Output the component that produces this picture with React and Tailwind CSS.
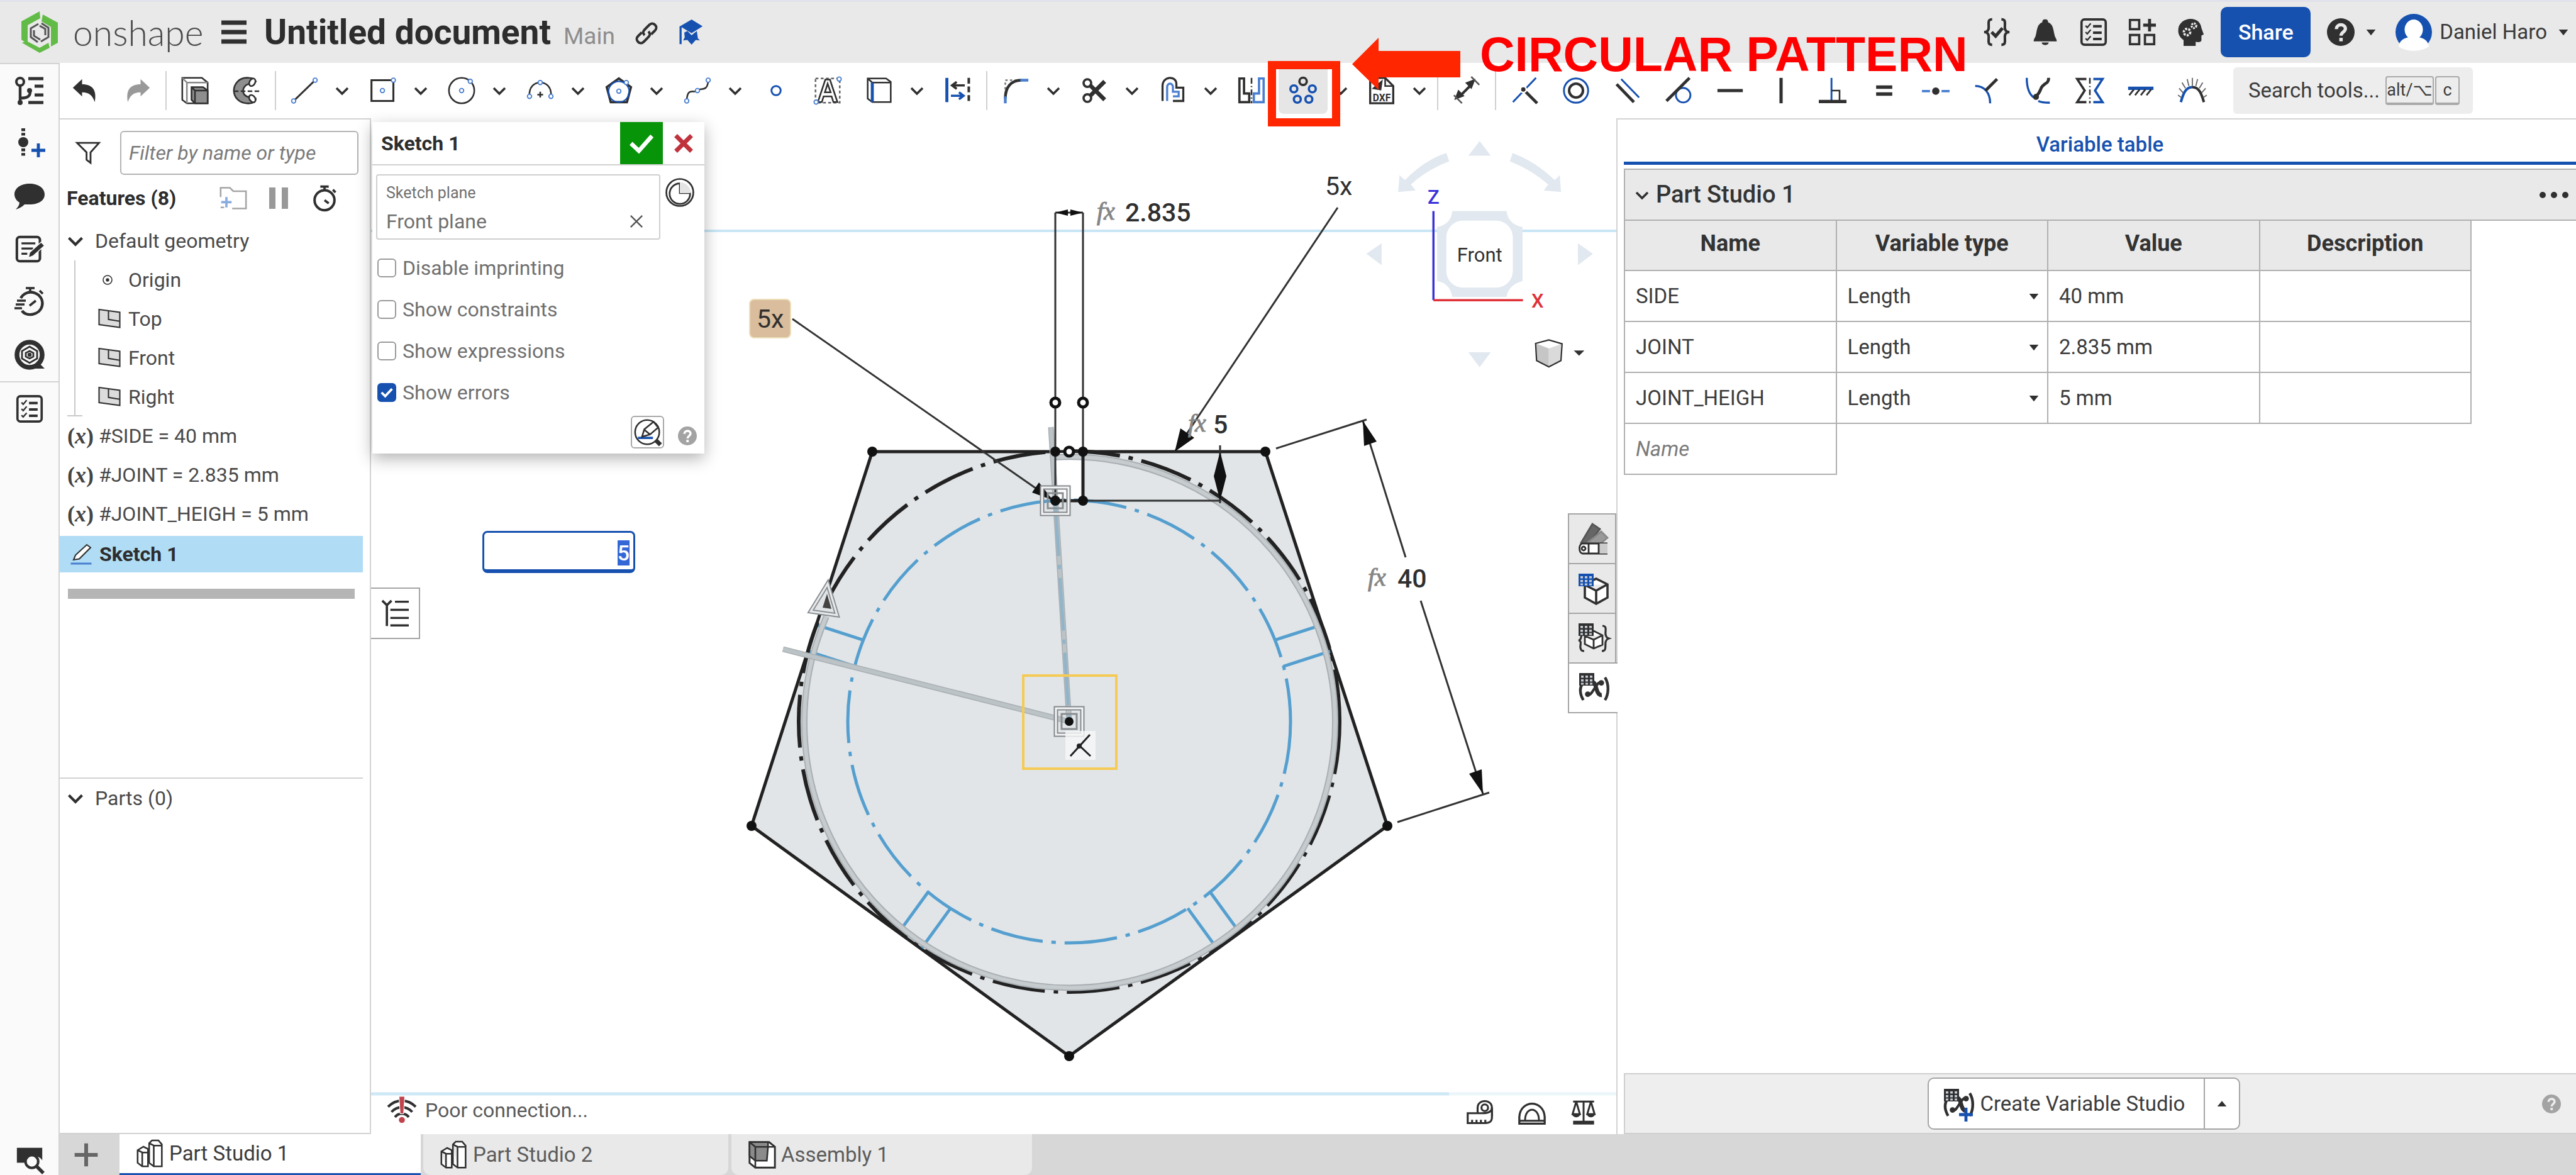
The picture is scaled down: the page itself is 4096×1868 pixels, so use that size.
import { useEffect, useRef } from 'react';

const INK = '#303030';
const BLUE = '#1651b0';

const variables = [
  { name: 'SIDE', type: 'Length', value: '40 mm' },
  { name: 'JOINT', type: 'Length', value: '2.835 mm' },
  { name: 'JOINT_HEIGH', type: 'Length', value: '5 mm' }
];

const planes = ['Top', 'Front', 'Right'];

const sketchOptions = [
  { id: 'imprinting', label: 'Disable imprinting', checked: false },
  { id: 'constraints', label: 'Show constraints', checked: false },
  { id: 'expressions', label: 'Show expressions', checked: false },
  { id: 'errors', label: 'Show errors', checked: true }
];

function Icon({ children, className = 'h-11 w-11', box = '0 0 24 24' }) {
  return (
    <svg
      className={`shrink-0 overflow-visible ${className}`}
      viewBox={box}
      fill="none"
      stroke={INK}
      strokeWidth="1.4"
      aria-hidden="true"
    >
      {children}
    </svg>
  );
}

function Knob({ x, y, r = 1.8 }) {
  return <circle cx={x} cy={y} r={r} fill="#fff" stroke="#4a7fd0" strokeWidth="1" />;
}

function Chevron({ className = 'h-6 w-6' }) {
  return (
    <Icon className={className}>
      <path d="M3 8 12 17 21 8" strokeWidth="3.6" />
    </Icon>
  );
}

function Caret({ className = 'h-4 w-4', up = false }) {
  return (
    <Icon className={className}>
      <path d={up ? 'M1 18 12 5 23 18Z' : 'M1 6h22L12 20Z'} fill={INK} stroke="none" />
    </Icon>
  );
}

function HelpIcon({ className = 'h-11 w-11', color = INK, mark = '#e9e9e9' }) {
  return (
    <Icon className={className}>
      <circle cx="12" cy="12" r="12" fill={color} stroke="none" />
      <path d="M8.2 9.4c0-5 7.8-4.8 7.8-.4 0 3-3.8 3-3.8 6.2" stroke={mark} strokeWidth="2.8" />
      <path d="M10.7 17h3v3h-3z" fill={mark} stroke="none" />
    </Icon>
  );
}

function ChecklistIcon() {
  return (
    <Icon>
      <rect x="1.5" y="1" width="21" height="22" rx="2.5" strokeWidth="2" />
      <path d="M5 6.5l1.5 1.5L9.5 4.5M5 12l1.5 1.5L9.5 10M5 17.5l1.5 1.5L9.5 15.5" strokeWidth="1.3" />
      <path d="M11.5 7H19M11.5 12.5H19M11.5 18H19" strokeWidth="2.2" />
    </Icon>
  );
}

function StopwatchIcon({ className = 'h-11 w-11' }) {
  return (
    <Icon className={className}>
      <circle cx="12" cy="14" r="9.5" strokeWidth="2.4" />
      <path d="M8 1h8M12 1v4M20 4l2.5 2.5M12 14l4 3" strokeWidth="2.2" />
    </Icon>
  );
}

function GridMark({ color = INK }) {
  return (
    <g>
      <rect x="1" y="0" width="12" height="10" fill={color} stroke="none" />
      <path
        d="M2.5 2h2v1.8h-2zM6 2h2v1.8H6zM9.5 2h2v1.8h-2zM2.5 5h2v1.8h-2zM6 5h2v1.8H6zM9.5 5h2v1.8h-2zM2.5 7.8h2v1.4h-2zM6 7.8h2v1.4H6zM9.5 7.8h2v1.4h-2z"
        fill="#c5cbd4"
        stroke="none"
      />
    </g>
  );
}

function VariableStudioIcon({ plus = false }) {
  return (
    <Icon className="h-12 w-12">
      <path d="M3.5 8.5c-2.5 4-1.5 9 .8 13M21.5 3.5c3.2 5 3.2 13 0 18" strokeWidth="2.2" />
      <path d="M12 7.5c3 0 2 10.5 7 10" strokeWidth="3.2" />
      <path d="M8 17.5c4 0 6-10 10.5-10.5" strokeWidth="2" />
      <circle cx="7.8" cy="16.8" r="2.2" fill={INK} stroke="none" />
      <circle cx="18.6" cy="7.8" r="2.2" fill={INK} stroke="none" />
      <GridMark />
      {plus && <path d="M18.5 15v11M13 20.5h11" stroke={BLUE} strokeWidth="2.4" />}
    </Icon>
  );
}

function PartStudioIcon() {
  return (
    <Icon>
      <path d="M1 9 6 6l4 2v15H5l-4-3ZM5 23V11L1 9M5 11h5" fill="#fff" />
      <path d="M11 3 13.5.5h5.5l3 3.5v19h-7l-4-3ZM15 23V5l-4-2M15 5h7" fill="#fff" />
    </Icon>
  );
}

function AssemblyIcon() {
  return (
    <Icon>
      <path d="M1 1h17l5 4v18H6l-5-4Z" fill="#fff" strokeWidth="1.6" />
      <path d="M1 1h16v4l-1 12H6L1 13Z" fill="#8b8b8b" />
      <path d="M1 1l5 4v18M6 5h17" />
    </Icon>
  );
}

const toolIcons = {
  undo: <path d="M1 9.5 9 2v4.5c9 0 13 5 11 15.5-2-6-5-8.5-11-8.5V17Z" fill={INK} stroke="none" />,
  redo: <path d="M23 9.5 15 2v4.5c-9 0-13 5-11 15.5 2-6 5-8.5 11-8.5V17Z" fill="#999" stroke="none" />,
  extrude: (
    <g>
      <path d="M1 1h17l5 4v18H5l-4-3Z" fill="#fff" />
      <path d="M1 1l4 4v18M5 5h18" stroke="#888" />
      <path d="M9 9h10l4 3v11H12l-3-3Z" fill="#8e8e8e" />
      <path d="M9 9l3 3h11M12 12v11" />
    </g>
  ),
  revolve: (
    <g>
      <path d="M14 1C5 0 1 7 1 12s4 12 14 11c3 0 5-2 5-4l-5-1c-5-1-6-4-6-6s2-6 7-6l4-2c-1-2-3-3-6-3Z" fill="#8e8e8e" />
      <ellipse cx="17" cy="4.8" rx="2.4" ry="3.5" fill="#fff" transform="rotate(30 17 4.8)" />
      <ellipse cx="17" cy="19" rx="2.4" ry="3.5" fill="#fff" transform="rotate(-35 17 19)" />
      <path d="M1 12.5h22" strokeDasharray="4 2" />
    </g>
  ),
  line: (
    <g>
      <path d="M2.7 21 21.3 3" strokeWidth="1.7" />
      <Knob x={2.7} y={21} />
      <Knob x={21.3} y={3} />
    </g>
  ),
  rect: (
    <g>
      <path d="M2 3h19v18H2z" strokeWidth="1.7" />
      <Knob x={11.5} y={12} />
      <Knob x={21} y={3} />
    </g>
  ),
  circle: (
    <g>
      <circle cx="12" cy="12" r="11" />
      <Knob x={12} y={12} />
      <Knob x={19.5} y={4} />
    </g>
  ),
  arc: (
    <g>
      <path d="M2.7 17C1 1 23 1 21.3 17" />
      <path d="M12 13v5M9.5 15.5h5" />
      <Knob x={2.7} y={17} />
      <Knob x={21.3} y={17} />
      <Knob x={12} y={5} />
    </g>
  ),
  polygon: (
    <g>
      <path d="M12 1.5 22.5 9 19 22H5L1.5 9Z" strokeWidth="2" />
      <circle cx="12" cy="13" r="9" stroke={BLUE} strokeWidth="1.2" />
      <Knob x={12} y={12.5} />
      <Knob x={18.5} y={5} />
    </g>
  ),
  spline: (
    <g>
      <path d="M2.7 21C3 8 10 15 12 12s9 2 9.3-9" />
      <Knob x={2.7} y={21} />
      <Knob x={12} y={12} />
      <Knob x={21.3} y={3} />
    </g>
  ),
  point: <circle cx="12" cy="12" r="4" stroke={BLUE} strokeWidth="1.6" />,
  text: (
    <g>
      <path d="M1.5 1.5h21v21h-21z" strokeDasharray="2.5 2" stroke="#666" />
      <path d="M3.5 22 10 2.5h4L20.5 22H17l-1.6-5H8.5L7 22ZM9.6 13.5h5L12 6Z" fill="#fff" />
      <Knob x={2} y={22} />
      <Knob x={22} y={2} />
    </g>
  ),
  use: (
    <g>
      <path d="M2 1.5h16l4 3V22H6L2 19Z" fill="#fff" />
      <path d="M2 1.5 6 5h16" />
      <path d="M6 5v17" stroke={BLUE} strokeWidth="2.6" />
    </g>
  ),
  convert: (
    <g>
      <path d="M2.5 1v21" stroke={BLUE} strokeWidth="2.6" />
      <path d="M21.5 1v21" strokeWidth="2.2" strokeDasharray="5 2.5" />
      <path d="M18 7.5H8M11 4.5l-4 3 4 3" strokeWidth="2" />
      <path d="M6 16.5h10M13 13.5l4 3-4 3" stroke={BLUE} strokeWidth="2" />
    </g>
  ),
  fillet: (
    <g>
      <path d="M3 15V3h11" strokeDasharray="2 2" stroke="#777" />
      <path d="M3 19C3 9 8 3 17 3" strokeWidth="2.4" />
      <path d="M3 17v6M16 3h7" stroke="#4a7fd0" strokeWidth="2.4" />
    </g>
  ),
  trim: (
    <g>
      <circle cx="6" cy="5.5" r="3.3" strokeWidth="2" />
      <circle cx="6" cy="18.5" r="3.3" strokeWidth="2" />
      <path d="M8.5 7.5 21 20M8.5 16.5 21 4" strokeWidth="3.6" />
    </g>
  ),
  offset: (
    <g>
      <path d="M3 21V8c0-9 12-9 12-2v3.5h6V21h-9" strokeWidth="1.8" />
      <path d="M7 21V9c0-4 5-4 5 0v4h5v4h-5" stroke="#4a7fd0" strokeWidth="1.8" />
    </g>
  ),
  mirror: (
    <g>
      <path d="M1.5 1.5h4v13H10V22H1.5z" strokeWidth="2" />
      <path d="M22.5 1.5h-4v13H14V22h8.5z" stroke="#4a7fd0" strokeWidth="2" />
      <path d="M12 1v22" strokeDasharray="5 2 1 2" />
    </g>
  ),
  circular: (
    <g strokeWidth="2">
      <circle cx="12" cy="4" r="3.2" />
      <circle cx="4" cy="10.5" r="3" stroke={BLUE} />
      <circle cx="20" cy="10.5" r="3" stroke={BLUE} />
      <circle cx="7" cy="19.5" r="3" stroke={BLUE} />
      <circle cx="17" cy="19.5" r="3" stroke={BLUE} />
    </g>
  ),
  dxf: (
    <g>
      <path d="M2 1h13l7 7v15H2z" fill="#fff" strokeWidth="1.8" />
      <path d="M15 1v7h7" />
      <path d="M5 10 12 4l-1 7Z" fill={INK} />
      <text x="12" y="21" fontSize="8.5" fontWeight="700" textAnchor="middle" fill={INK} stroke="none" fontFamily="Roboto">DXF</text>
    </g>
  ),
  dimension: (
    <g>
      <path d="M6 17 17 6" strokeWidth="2.2" />
      <path d="M2.5 19 9 16.5l-4-4ZM18.5 3l-6.5 2.5 4 4Z" fill={INK} />
      <path d="M1 16l7 7M16 0l7 7" stroke="#555" />
    </g>
  ),
  coincident: (
    <g>
      <path d="M2 22 22 1" stroke={BLUE} strokeWidth="1.6" />
      <path d="M12 12 23 23" strokeWidth="2.6" />
      <circle cx="11" cy="11" r="2.6" fill={INK} stroke="#fff" />
    </g>
  ),
  concentric: (
    <g>
      <circle cx="12" cy="12" r="10.5" stroke={BLUE} strokeWidth="1.6" />
      <circle cx="12" cy="12" r="6" strokeWidth="2.2" />
    </g>
  ),
  parallel: (
    <g>
      <path d="M3 6.5 18 22" strokeWidth="2.6" />
      <path d="M7 2 22.5 18" stroke={BLUE} strokeWidth="1.6" />
    </g>
  ),
  tangent: (
    <g>
      <circle cx="16" cy="16" r="6.3" stroke={BLUE} strokeWidth="1.6" />
      <path d="M1.5 21 21.5 1" strokeWidth="2.6" />
    </g>
  ),
  horizontal: <path d="M1 12h22" strokeWidth="2.8" />,
  vertical: <path d="M12 1v22" strokeWidth="2.8" />,
  perpendicular: (
    <g>
      <path d="M11 1v20" stroke={BLUE} strokeWidth="1.6" />
      <path d="M11 12h7v9" />
      <path d="M0 21.5h24" strokeWidth="2.8" />
    </g>
  ),
  equal: <path d="M5 9h14M5 15h14" strokeWidth="3" />,
  midpoint: (
    <g>
      <path d="M0 12.5h7M17 12.5h7" stroke="#4a7fd0" strokeWidth="2" />
      <circle cx="12" cy="12.5" r="3.2" fill={INK} stroke="none" />
    </g>
  ),
  normal: (
    <g>
      <path d="M2 8c8 0 13 6 13 15" stroke={BLUE} strokeWidth="1.8" />
      <path d="M11 12 21 2" strokeWidth="2.6" />
    </g>
  ),
  pierce: (
    <g>
      <path d="M2 1c0 8 2 14 6 17M12 21c3 1.5 6 1.5 10 1.5" stroke={BLUE} strokeWidth="1.8" />
      <path d="M21 1c0 6-5 4-7 10-1 3-2 4-4 6" strokeWidth="2.6" />
      <circle cx="10" cy="17.5" r="2.6" fill={INK} stroke="none" />
    </g>
  ),
  symmetric: (
    <g>
      <path d="M9 2H1l6.5 10L1 22h8" strokeWidth="2" />
      <path d="M15 2h8l-6.5 10L23 22h-8" stroke={BLUE} strokeWidth="2" />
      <path d="M12 1v22" strokeDasharray="5 2 1 2" />
    </g>
  ),
  fix: (
    <g>
      <path d="M1 10h22" stroke={BLUE} strokeWidth="2.8" />
      <path d="M6 11l-4 5M11 11l-4 5M16 11l-4 5M21 11l-4 5" strokeWidth="1.5" />
    </g>
  ),
  curvature: (
    <g>
      <path d="M2 22C4 15 6 9 12 9" stroke={BLUE} strokeWidth="2.2" />
      <path d="M12 9c6 0 8 6 10 13" strokeWidth="2.2" />
      <path d="M12 8V1M15 8l1.5-6M9 8 7.5 2M18 10l3-5M6 10 3 5M4 14 .5 10M20 14l3.5-4M2.5 18-.5 16M21.5 18l3-2" strokeWidth="1" stroke="#666" />
    </g>
  )
};

// entries are [icon, has drop-down]; null draws a divider
const sketchTools = [
  ['undo'], ['redo'], null,
  ['extrude'], ['revolve'], null,
  ['line', true], ['rect', true], ['circle', true], ['arc', true], ['polygon', true], ['spline', true],
  ['point'], ['text'], ['use', true], ['convert'], null,
  ['fillet', true], ['trim', true], ['offset', true], ['mirror'], ['circular', true], ['dxf', true], null,
  ['dimension'], null
];

const constraintTools = [
  'coincident', 'concentric', 'parallel', 'tangent', 'horizontal', 'vertical', 'perpendicular',
  'equal', 'midpoint', 'normal', 'pierce', 'symmetric', 'fix', 'curvature'
];

function Header() {
  return (
    <header className="flex h-[100px] shrink-0 items-center border-t-[3px] border-[#e0e1ea] bg-[#e9e9e9] pb-[1px] pl-[32px] pr-[12px]">
      <Icon className="h-[66px] w-[62px]" box="0 0 62 66">
        <path d="M31 0 2 16v29l10 7V22l20-11Z" fill="#62bb46" stroke="none" />
        <path d="M36 5l24 13v32l-11 6V25L34 16Z" fill="#62bb46" stroke="none" />
        <path d="M3 50l7-3 21 11 14-8 2 8-16 8Z" fill="#62bb46" stroke="none" />
        <path d="M29 20 17 27v14l11 8M34 19l11 7v15l-12 7M22 30v9l10 6M31 23l9 5v10" stroke="#555" strokeWidth="3" />
      </Icon>
      <span className="ml-[22px] w-[212px] font-[Lato] text-[57px] leading-[60px] font-light text-[#4a4a4a]">onshape</span>
      <button type="button" aria-label="Document menu" className="ml-[24px]">
        <Icon className="h-10 w-10" box="0 0 40 40">
          <path d="M0 5h40M0 20h40M0 35h40" strokeWidth="7" />
        </Icon>
      </button>
      <h1 className="ml-[28px] text-[55px] leading-[60px] font-bold text-[#2d2d2d]">Untitled document</h1>
      <span className="ml-[20px] pt-[14px] text-[37px] leading-[40px] text-[#8d8d8d]">Main</span>
      <button type="button" aria-label="Copy link" className="ml-[32px] pt-[4px]">
        <Icon className="h-9 w-9">
          <path d="M10 14c-3-3-1-5 1-7l4-4c4-4 10 2 6 6l-4 4M14 10c3 3 1 5-1 7l-4 4c-4 4-10-2-6-6l4-4" strokeWidth="2.6" />
        </Icon>
      </button>
      <button type="button" aria-label="Learning centre" className="ml-[32px]">
        <Icon className="h-10 w-10">
          <path d="M13 0 23.5 6.5 13 13 2 6.5Z" fill={BLUE} stroke="none" />
          <path d="M2.5 6.5v17" stroke={BLUE} strokeWidth="2" />
          <path d="M6 12.5 9 11l4 4 5-4 1 7 2 2-4-.5L13 24l-4-4.5-4 .5 1.5-3Z" fill={BLUE} stroke="none" />
        </Icon>
      </button>

      <div className="ml-auto flex items-center">
        <div className="flex gap-[33px]">
          <button type="button" aria-label="Checks">
            <Icon>
              <path d="M8 1C4 1 5 4 5 8c0 3-2 4-4 4 2 0 4 1 4 4 0 4-1 7 3 7M16 1c4 0 3 3 3 7 0 3 2 4 4 4-2 0-4 1-4 4 0 4 1 7-3 7" strokeWidth="2.2" />
              <path d="M7.5 12l3.5 3.5 6-7" strokeWidth="2.8" />
            </Icon>
          </button>
          <button type="button" aria-label="Notifications">
            <Icon>
              <path d="M12 1c2 0 2.5 1 2.5 2.5C19 5 19 10 20 14c.5 3 2 3.5 2 6H2c0-2.5 1.5-3 2-6 1-4 1-9 5.5-10.5C9.5 2 10 1 12 1ZM9 21h6c0 3-6 3-6 0Z" fill={INK} stroke="none" />
            </Icon>
          </button>
          <button type="button" aria-label="Tasks"><ChecklistIcon /></button>
          <button type="button" aria-label="Apps">
            <Icon>
              <path d="M1.5 1.5h8v8h-8zM1.5 14.5h8v8h-8zM14.5 14.5h8v8h-8z" strokeWidth="2" />
              <path d="M18.5.5v11M13 6h11" strokeWidth="2.6" />
            </Icon>
          </button>
          <button type="button" aria-label="AI advisor">
            <Icon>
              <path d="M6 24v-5C2 16 1 13 1.5 9 2 4 7 .5 12 .5c6 0 9 3.5 9.5 8l2 5.5-2 1v4c0 2-3 2-5 1.5V24Z" fill={INK} stroke="none" />
              <circle cx="9" cy="12" r="2.8" stroke="#e9e9e9" strokeWidth="2" strokeDasharray="1.8 1" />
              <circle cx="15" cy="6.5" r="2" stroke="#e9e9e9" strokeWidth="1.8" strokeDasharray="1.5 .8" />
            </Icon>
          </button>
        </div>
        <button type="button" className="ml-[26px] h-[80px] w-[143px] rounded-[10px] bg-[#1651b0] text-[34px] font-medium text-white">Share</button>
        <button type="button" aria-label="Help" className="ml-[26px] flex items-center gap-[18px]">
          <HelpIcon />
          <Caret />
        </button>
        <button type="button" className="ml-[31px] flex items-center text-[33px] text-[#3a3a3a]">
          <Icon className="h-[58px] w-[58px]" box="0 0 58 58">
            <circle cx="29" cy="29" r="29" fill={BLUE} stroke="none" />
            <ellipse cx="29" cy="25" rx="14.5" ry="16" fill="#fff" stroke="none" />
            <path d="M5 52c1-9 8-14 18-15h12c10 1 17 6 18 15-12 9-36 9-48 0Z" fill="#fff" stroke="none" />
          </Icon>
          <span className="ml-[12px] mr-[18px]">Daniel Haro</span>
          <Caret />
        </button>
      </div>
    </header>
  );
}

function Toolbar() {
  return (
    <div className="flex h-[88px] shrink-0 items-center bg-white">
      {sketchTools.map((tool, i) =>
        tool === null ? (
          <span key={i} className="mx-1 h-[62px] w-[2px] shrink-0 bg-[#d0d0d0]" />
        ) : (
          <div key={i} className="flex shrink-0 items-center">
            <button
              type="button"
              aria-label={tool[0]}
              className={`mx-[2px] flex h-[74px] w-[78px] items-center justify-center ${tool[0] === 'circular' ? 'rounded-b-lg bg-[#e6e6e6]' : ''}`}
            >
              <Icon>{toolIcons[tool[0]]}</Icon>
            </button>
            {tool[1] && (
              <button type="button" aria-label={`${tool[0]} options`} className="flex h-[74px] w-[43px] items-center pl-[7px]">
                <Chevron />
              </button>
            )}
          </div>
        )
      )}
      <div className="grid w-[1144px] shrink-0 grid-cols-14">
        {constraintTools.map((name) => (
          <button key={name} type="button" aria-label={name} className="flex h-[74px] items-center justify-center">
            <Icon>{toolIcons[name]}</Icon>
          </button>
        ))}
      </div>
      <button type="button" className="ml-[24px] flex h-[74px] w-[381px] shrink-0 items-center rounded-md bg-[#ededed] pl-[24px] text-[33px] text-[#3c3c3c]">
        <span className="w-[218px] text-left">Search tools...</span>
        <kbd className="mr-[2px] flex h-[46px] w-[77px] items-center justify-center rounded border-2 border-b-4 border-[#a9a9a9] font-[Roboto,'DejaVu_Sans',sans-serif] text-[27px]">alt/⌥</kbd>
        <kbd className="flex h-[46px] w-[39px] items-center justify-center rounded border-2 border-b-4 border-[#a9a9a9] font-[Roboto] text-[27px]">c</kbd>
      </button>
    </div>
  );
}

function SideRail() {
  const cell = 'flex h-[84px] w-full items-center justify-center';
  return (
    <nav className="flex w-[95px] shrink-0 flex-col border-t-2 border-r-2 border-[#d3d3d3] bg-[#fafafa]">
      <button type="button" aria-label="Versions" className={cell}>
        <Icon className="h-12 w-12">
          <circle cx="4.5" cy="5" r="3" strokeWidth="2" />
          <path d="M4.5 8v13M4.5 18c5 0 8-1 8-5" strokeWidth="2.2" />
          <circle cx="4.5" cy="21.5" r="2" fill={INK} stroke="none" />
          <circle cx="12" cy="12" r="2" fill={INK} stroke="none" />
          <path d="M11 2.5h12M16 8.5h7M16 15.5h7M11 21.5h12" strokeWidth="2.4" />
        </Icon>
      </button>
      <button type="button" aria-label="Insert version" className={cell}>
        <Icon className="h-12 w-12">
          <circle cx="7" cy="11" r="4" fill={INK} stroke="none" />
          <path d="M7 0v6M7 16v7" strokeWidth="3" strokeDasharray="2.2 1.4" />
          <path d="M19 12v11M13.5 17.5h11" stroke={BLUE} strokeWidth="2.4" />
        </Icon>
      </button>
      <button type="button" aria-label="Comments" className={cell}>
        <Icon className="h-12 w-12">
          <path d="M12 2c7 0 12 3.5 12 8.5S19 18.5 12 18.5c-2 0-3 0-4 0-2 2-4 3-7 4 2-2 3-4 3-5.5C1.5 15.5 0 13 0 10.5 0 5.5 5 2 12 2Z" fill={INK} stroke="none" />
        </Icon>
      </button>
      <button type="button" aria-label="Notes" className={cell}>
        <Icon>
          <rect x="1" y="1.5" width="20" height="21" rx="2.5" strokeWidth="2.2" />
          <path d="M5 7h12M5 11.5h10M5 16h5" strokeWidth="1.8" />
          <path d="M12 15 22 6l3 3-10 9-4 1.5Z" fill={INK} stroke="#fafafa" strokeWidth=".8" />
        </Icon>
      </button>
      <button type="button" aria-label="Performance" className={cell}>
        <Icon className="h-12 w-12">
          <path d="M5 9c5-9 19-4 17 6-2 8-13 9-16 4" strokeWidth="2.2" />
          <path d="M9 1h7M12.5 1v4M20 3l2.5 2.5M12 15l5-4M2 11h7M1 14h7M0 17h6" strokeWidth="1.8" />
        </Icon>
      </button>
      <button type="button" aria-label="Search models" className={cell}>
        <Icon className="h-12 w-12">
          <circle cx="12" cy="12" r="10" strokeWidth="3.8" />
          <path d="M18 17l6 6h-8Z" fill={INK} stroke="none" />
          <path d="M12 5.5 18 9v6l-6 3.5L6 15V9ZM12 9l3 1.5v3L12 15l-3-1.5v-3Z" strokeWidth="1.4" />
          <circle cx="12" cy="12" r="1.6" fill={INK} stroke="none" />
        </Icon>
      </button>
      <div className="border-t-2 border-[#d3d3d3]">
        <button type="button" aria-label="Task list" className={cell}><ChecklistIcon /></button>
      </div>
      <button type="button" aria-label="Find" className="mt-auto flex h-[50px] items-center justify-center">
        <Icon>
          <path d="M1 2h22v11a7 7 0 0 0-13 2H1Z" fill={INK} stroke="none" />
          <circle cx="14" cy="14" r="5.5" fill="#fafafa" strokeWidth="2.2" />
          <path d="M18 18l6 6" strokeWidth="3" />
        </Icon>
      </button>
    </nav>
  );
}

function VariableMark() {
  return (
    <span className="w-[50px] font-[Liberation_Serif] text-[36px] font-bold leading-[40px] text-[#444]" aria-hidden="true">
      (<i>x</i>)
    </span>
  );
}

function FeaturePanel() {
  return (
    <aside className="flex w-[495px] shrink-0 flex-col border-t-2 border-r-2 border-b-2 border-[#d3d3d3] bg-white text-[32px] text-[#4a4a4a]">
      <div className="flex items-center pt-[18px] pl-[26px]">
        <Icon className="h-[38px] w-[38px]">
          <path d="M1 2h22l-8.5 9.5V22l-4-3v-7.5Z" strokeWidth="1.8" />
        </Icon>
        <input
          type="text"
          aria-label="Filter features"
          placeholder="Filter by name or type"
          className="ml-[32px] h-[70px] w-[379px] rounded-[6px] border-2 border-[#b4b4b4] px-[12px] italic placeholder:text-[#7b7b7b]"
        />
      </div>
      <div className="flex h-[74px] items-center pl-[11px]">
        <h2 className="w-[243px] font-bold text-[#2d2d2d]">Features (8)</h2>
        <button type="button" aria-label="Add folder">
          <Icon>
            <path d="M1 11V3h8l3 3h11v15H11M1 20h3" stroke="#a5a5a5" />
            <path d="M6 11v9M1.5 15.5h9" stroke="#8aabdf" strokeWidth="2" />
          </Icon>
        </button>
        <button type="button" aria-label="Pause" className="ml-[35px]">
          <Icon className="h-[34px] w-[30px]" box="0 0 30 34">
            <path d="M0 0h10v34H0zM20 0h10v34H20z" fill="#999" stroke="none" />
          </Icon>
        </button>
        <button type="button" aria-label="Regeneration times" className="ml-[38px]">
          <StopwatchIcon className="h-10 w-10" />
        </button>
      </div>

      <ul>
        <li className="flex h-[62px] items-center pl-[11px]">
          <Chevron className="mr-[17px] h-7 w-7" />
          Default geometry
        </li>
        <li className="flex">
          <div className="ml-[12px] w-[24px] border-b-2 border-[#c8c8c8]">
            <div className="ml-[11px] h-full w-[2px] bg-[#c8c8c8]" />
          </div>
          <ul>
            <li className="flex h-[62px] items-center">
              <Icon className="ml-[32px] mr-[25px] h-4 w-4">
                <circle cx="12" cy="12" r="10.5" strokeWidth="2.4" />
                <circle cx="12" cy="12" r="4" fill={INK} stroke="none" />
              </Icon>
              Origin
            </li>
            {planes.map((plane) => (
              <li key={plane} className="flex h-[62px] items-center">
                <Icon className="ml-[25px] mr-[12px] h-9 w-9">
                  <path d="M1 2 23 5v16L1 18Z" fill="#dcdcdc" />
                  <path d="M11 3.5v9L23 14.5" />
                </Icon>
                {plane}
              </li>
            ))}
          </ul>
        </li>
        {variables.map((v) => (
          <li key={v.name} className="flex h-[62px] items-center pl-[12px]">
            <VariableMark />#{v.name} = {v.value}
          </li>
        ))}
        <li className="mt-1 mr-[11px] flex h-[58px] items-center bg-[#b0ddf5] pl-[16px] font-bold text-[#2d2d2d]">
          <Icon className="mr-[11px] h-9 w-9">
            <path d="M4 18 6 13 18 2l4 3L10 17Z" fill="#fff" />
            <path d="M1 22h22" stroke="#4a7fd0" strokeWidth="2" />
          </Icon>
          Sketch 1
        </li>
      </ul>
      <div className="mt-[26px] mr-[24px] ml-[13px] h-[16px] bg-[#b5b5b5]" />
      <div className="mt-[284px] mr-[11px] flex h-[64px] items-center border-t-2 border-[#d3d3d3] pl-[11px]">
        <Chevron className="mr-[17px] h-7 w-7" />
        Parts (0)
      </div>
    </aside>
  );
}

function SketchDialog() {
  return (
    <section className="absolute top-[6px] left-[2px] w-[528px] bg-white text-[32px] text-[#707070] shadow-[0_8px_24px_rgba(0,0,0,0.3)]">
      <div className="flex h-[69px] items-center border-b-2 border-[#d0d0d0]">
        <h2 className="flex-1 pl-[14px] font-bold text-[#2d2d2d]">Sketch 1</h2>
        <button type="button" aria-label="Accept" className="flex h-full w-[68px] items-center justify-center bg-[#089408]">
          <Icon className="h-10 w-10">
            <path d="M2 12l7.5 7L22 5" stroke="#fff" strokeWidth="4" />
          </Icon>
        </button>
        <button type="button" aria-label="Cancel" className="flex h-full w-[66px] items-center justify-center">
          <Icon className="h-[30px] w-[30px]">
            <path d="M2 2l20 20M22 2 2 22" stroke="#c0333c" strokeWidth="5.5" />
          </Icon>
        </button>
      </div>
      <div className="flex items-start pt-[14px] pl-[6px]">
        <div className="h-[104px] w-[452px] rounded border-2 border-[#cfcfcf] px-[14px] pt-[10px]">
          <div className="text-[25px] leading-[36px]">Sketch plane</div>
          <div className="flex items-center justify-between pt-[3px] pr-[12px] leading-[48px]">
            Front plane
            <button type="button" aria-label="Clear sketch plane">
              <Icon className="h-5 w-5">
                <path d="M1 1l22 22M23 1 1 23" strokeWidth="2.8" stroke="#555" />
              </Icon>
            </button>
          </div>
        </div>
        <button type="button" aria-label="Final" className="ml-[8px] pt-[6px]">
          <Icon className="h-[46px] w-[46px]">
            <circle cx="12" cy="12" r="11.2" />
            <path d="M12 4.5v8h8.5A8.5 8.5 0 1 1 12 4.5Z" />
            <path d="M12 3.5a9 9 0 0 1 9 9h-9Z" fill="#e4e4e4" stroke="none" />
          </Icon>
        </button>
      </div>
      <div className="pt-[12px] pb-[2px] pl-[8px]">
        {sketchOptions.map((option) => (
          <label key={option.id} className="flex h-[66px] items-center gap-[10px]">
            <span className="grid h-[30px] w-[30px] place-items-center">
              <input
                type="checkbox"
                defaultChecked={option.checked}
                className="h-[30px] w-[30px] appearance-none rounded-[6px] border-2 border-[#9a9a9a] bg-white [grid-area:1/1] checked:border-[#1651b0] checked:bg-[#1651b0]"
              />
              <Icon className="pointer-events-none h-5 w-5 [grid-area:1/1]">
                <path d="M2 12l7 7L22 5" stroke="#fff" strokeWidth="4.5" />
              </Icon>
            </span>
            {option.label}
          </label>
        ))}
      </div>
      <div className="flex items-center justify-end pt-[2px] pr-[12px] pb-[8px]">
        <button type="button" aria-label="Sketch view" className="flex h-[52px] w-[53px] items-center justify-center rounded-[6px] border-2 border-[#a8a8a8]">
          <Icon>
            <circle cx="11.5" cy="12" r="10.5" />
            <path d="M3.5 17h13" stroke={BLUE} strokeWidth="2" />
            <path d="M7 16 9 9.5 17 3l4 5-7 6Z" />
            <path d="M9 10l5 4" />
            <path d="M19 19l4 4" strokeWidth="3.6" />
          </Icon>
        </button>
        <button type="button" aria-label="Help" className="ml-[22px] pt-[12px]">
          <HelpIcon className="h-[30px] w-[30px]" color="#a3a3a3" mark="#fff" />
        </button>
      </div>
    </section>
  );
}

function ViewCube() {
  return (
    <g transform="translate(2141 205) scale(0.31)">
      <g fill="#e1e8ef">
        <path d="M683 62 740 137H625ZM683 1222 740 1145H625ZM102 640 180 586V698ZM1264 640 1187 586V698Z" />
        <path d="M512 123 527 166Q410 210 330 285L355 315 265 323 272 237 300 262Q400 160 512 123ZM852 123 838 166Q950 210 1035 285L1012 315 1100 323 1094 237 1068 262Q965 165 852 123Z" />
        <path d="M543 421H821Q830 490 903 503V780Q830 800 821 861H543Q530 790 465 780V503Q535 490 543 421Z" />
      </g>
      <rect x="512" y="470" width="341" height="344" rx="85" fill="#fff" />
      <path d="M446 421V878" stroke="#3a32d8" strokeWidth="11" />
      <path d="M446 878H905" stroke="#e03038" strokeWidth="11" />
      <g fontSize="100" fontWeight="500" textAnchor="middle">
        <text x="683" y="680" fill="#303030" fontWeight="400">Front</text>
        <text x="446" y="385" fill="#3a32d8">Z</text>
        <text x="980" y="917" fill="#e03038">X</text>
      </g>
      <path d="M970 1100 1038 1082 1106 1102 1100 1188 1038 1220 975 1188Z" fill="#fff" />
      <path d="M970 1100 1038 1126V1220L975 1188Z" fill="#c6c6c6" />
      <path d="M1106 1102 1038 1126V1220L1100 1188Z" fill="#dadada" />
      <path d="M970 1100 1038 1082 1106 1102 1100 1188 1038 1220 975 1188Z" fill="none" stroke="#303030" strokeWidth="7" />
      <path d="M1166 1136H1220L1193 1163Z" fill="#303030" />
    </g>
  );
}

function SketchDrawing() {
  return (
    <svg
      className="absolute inset-0 h-full w-full"
      viewBox="590 188 1980 1615"
      preserveAspectRatio="xMinYMin meet"
      fill="none"
      role="img"
      aria-label="Sketch 1 drawing"
    >
      <path d="M590 367H2570" stroke="#c8e6f6" strokeWidth="4" />
      <path d="M590 1739H2304" stroke="#cfe8f6" strokeWidth="5" />
      <path d="M2304 1739H2570" stroke="#ebf6fa" strokeWidth="5" />

      <path d="M1387 718H2012L2206 1313 1700 1679 1195 1313Z" fill="#e1e5e8" stroke="#222" strokeWidth="5" />
      <path d="M1679 720H1721V795H1679Z" fill="#fff" />

      {/* joint slots repeated round the centre */}
      <g stroke="#559fcf" strokeWidth="5">
        <circle cx="1700" cy="1147" r="352" strokeDasharray="84 14 7 14" />
        {[72, 144, 216, 288].map((angle) => (
          <path key={angle} d="M1678 718V796M1722 718V796" transform={`rotate(${angle} 1700 1147)`} />
        ))}
      </g>

      <circle cx="1700" cy="1147" r="430" stroke="#222" strokeWidth="6" strokeDasharray="84 14 7 14" />

      {/* preview of the rotation */}
      <path d="M1677 727A422 422 0 1 1 1314 980" stroke="#a9afb3" strokeWidth="10" />
      <path d="M1677 727A422 422 0 1 1 1314 980" stroke="#c6cbce" strokeWidth="6" />
      <path d="M1671 679 1700 1147 1245 1032" stroke="#a9afb3" strokeWidth="9" />
      <path d="M1671 679 1700 1147 1245 1032" stroke="#bcc3c7" strokeWidth="6" />
      <path d="M1678 800 1700 1147" stroke="#91b4c9" strokeWidth="5" strokeDasharray="84 14 7 14" />
      <path d="M1316 928 1289 972 1331 978Z" fill="#e1e5e8" stroke="#8b8f92" strokeWidth="7" />
      <path d="M1316 928 1289 972 1331 978Z" stroke="#e8eaec" strokeWidth="3" />
      <path d="M1315 944 1322 968 1308 966Z" fill="#444" />

      <g stroke="#333" strokeWidth="3">
        <path d="M1678 338V796M1722 338V718M1678 338H1722" />
        <path d="M1722 796H1940M1940 708V800" />
        <path d="M1260 507 1674 795M2127 330 1868 718" />
        <path d="M2029 713 2173 667M2222 1307 2368 1260M2167 669 2235 886M2259 955 2358 1262" />
      </g>
      <path d="M1722 718V796M1684 796H1722" stroke="#222" strokeWidth="5" />

      <g fill="#111">
        <path d="M1678 338 1698 333V343ZM1722 338 1702 333V343Z" />
        <path d="M1940 718 1950 757H1930ZM1940 796 1950 757H1930Z" />
        <path d="M1868 718 1877 681 1899 696ZM1674 795 1641 783 1652 767Z" />
        <path d="M2167 669 2189 702 2169 709ZM2358 1262 2336 1230 2356 1223Z" />
        <circle cx="1387" cy="718" r="8" />
        <circle cx="2012" cy="718" r="8" />
        <circle cx="2206" cy="1313" r="8" />
        <circle cx="1700" cy="1679" r="8" />
        <circle cx="1195" cy="1313" r="8" />
        <circle cx="1678" cy="718" r="8" />
        <circle cx="1722" cy="718" r="8" />
        <circle cx="1678" cy="796" r="8" />
        <circle cx="1722" cy="796" r="8" />
        <circle cx="1700" cy="1147" r="7" />
      </g>
      <g fill="#fff" stroke="#111" strokeWidth="5">
        <circle cx="1678" cy="640" r="7" />
        <circle cx="1722" cy="640" r="7" />
        <circle cx="1700" cy="718" r="7" />
      </g>

      <rect x="1627" y="1074" width="148" height="148" stroke="#f5cb55" strokeWidth="4" />
      {[[1678, 796], [1700, 1147]].map(([x, y]) => (
        <g key={y} fill="none">
          <rect x={x - 21} y={y - 21} width="42" height="42" stroke="#85898c" strokeWidth="7" />
          <rect x={x - 21} y={y - 21} width="42" height="42" stroke="#f4f5f6" strokeWidth="3" />
          <rect x={x - 12} y={y - 12} width="24" height="24" stroke="#8a8e91" strokeWidth="3" />
        </g>
      ))}
      <rect x="1694" y="1162" width="48" height="46" fill="#f6f7f8" fillOpacity="0.8" />
      <path d="M1702 1202 1733 1168M1717 1186 1734 1202" stroke="#222" strokeWidth="3" />
      <circle cx="1716" cy="1186" r="4" fill="#222" />

      <rect x="1192" y="476" width="65" height="61" rx="7" fill="#d9bd9c" stroke="#ecdfba" strokeWidth="2" />
      <g fill="#303030" fontSize="41">
        <text x="1203" y="521">5x</text>
        <text x="2107" y="310">5x</text>
        <g fontWeight="500">
          <text x="1789" y="352">2.835</text>
          <text x="1929" y="689">5</text>
          <text x="2222" y="934">40</text>
        </g>
      </g>
      <g fill="#858585" stroke="#858585" strokeWidth="1" fontSize="40" fontStyle="italic" fontFamily="Liberation Serif">
        <text x="1744" y="349">fx</text>
        <text x="1889" y="686">fx</text>
        <text x="2175" y="931">fx</text>
      </g>

      <ViewCube />
    </svg>
  );
}

function InstanceCountInput() {
  const ref = useRef(null);

  useEffect(() => {
    ref.current.focus();
    ref.current.select();
  }, []);

  return (
    <input
      ref={ref}
      type="text"
      aria-label="Number of instances"
      defaultValue="5"
      className="absolute top-[656px] left-[177px] h-[67px] w-[243px] rounded-[8px] border-[3px] border-b-[6px] border-[#1651b0] bg-white pt-[6px] pr-[6px] text-right text-[34px] font-medium text-[#303030] outline-none selection:bg-[#3367d6] selection:text-white"
    />
  );
}

function PanelTabs() {
  const tab = 'flex h-[79px] w-[77px] items-center justify-center border-2 border-b-0 border-[#a5a5a5]';
  return (
    <div className="absolute top-[628px] right-0 flex flex-col">
      <button type="button" aria-label="Appearances" className={`${tab} bg-[#e9e9e9]`}>
        <Icon className="h-12 w-12">
          <path d="M3 15 12 0l6 4L8 17Z" fill="#666" stroke="#555" />
          <path d="M8 15 19 6l5 5-6 5Z" fill="#999" stroke="#888" />
          <path d="M24 15.5H4c-3 1-3 7 0 8h20" fill="#fff" />
          <path d="M17 15.5h7v8h-7z" fill="#ccc" stroke="none" />
          <path d="M9 15.5v8M17 15.5v8" />
          <circle cx="5" cy="19.5" r="1.5" />
        </Icon>
      </button>
      <button type="button" aria-label="Configurations" className={`${tab} bg-[#e9e9e9]`}>
        <Icon className="h-12 w-12">
          <path d="M6 8 15 4l9 4.5V19l-9 5-9-5ZM6 9l9 4.5L24 8.5M15 13.5V24" fill="#fff" strokeWidth="1.8" />
          <GridMark color={BLUE} />
        </Icon>
      </button>
      <button type="button" aria-label="Configured properties" className={`${tab} bg-[#e9e9e9]`}>
        <Icon className="h-12 w-12">
          <path d="M6 9 13 6l7 3.5V17l-7 3-7-3.5ZM6 10l7 3 7-3.5M13 13v7" fill="#fff" />
          <path d="M4 10c-2 0 0 3-3 3.5 3 .5 1 4 1.5 6 .5 2 1 2.5 3 2.5M20 2c4 0 2 4 2.5 7 .5 2 1 2.5 2.5 3-1.5.5-2 1-2.5 3-.5 3 1 7-3 7" strokeWidth="1.6" />
          <GridMark />
        </Icon>
      </button>
      <button type="button" aria-label="Variable table" className="-mr-[2px] flex h-[81px] w-[79px] items-center justify-center border-2 border-r-0 border-[#a5a5a5] bg-white pr-[2px]">
        <VariableStudioIcon />
      </button>
    </div>
  );
}

function Canvas() {
  return (
    <main className="relative min-w-0 flex-[1980] bg-white">
      <SketchDrawing />
      <SketchDialog />
      <InstanceCountInput />
      <button type="button" aria-label="Feature list" className="absolute top-[746px] left-0 flex h-[82px] w-[78px] items-center justify-center border-2 border-l-0 border-[#a5a5a5] bg-white">
        <Icon>
          <path d="M1 1l4 4 4-4M5 5v18" strokeWidth="2" />
          <path d="M12 2h12M8 9h16M8 16h16M8 22.5h16" strokeWidth="1.8" />
        </Icon>
      </button>
      <PanelTabs />

      <div className="absolute right-0 bottom-0 left-0 flex h-[76px] items-center pr-[32px] pl-[27px] text-[32px] text-[#5a5a5a]">
        <Icon>
          <path d="M0 9C7 2 17 2 24 9M3 13.5c5-5.5 13-5.5 18 0M6 18c3-4 9-4 12 0" strokeWidth="2.2" />
          <path d="M9.5 0h5l-1 15h-3Z" fill="#c0434c" stroke="#fff" strokeWidth=".6" />
          <circle cx="12" cy="20.5" r="2.6" fill="#c0434c" stroke="none" />
        </Icon>
        <span className="ml-[15px]">Poor connection...</span>
        <div className="ml-auto flex items-center gap-[40px] pt-[6px]">
          <button type="button" aria-label="Measure">
            <Icon className="h-[42px] w-[42px]">
              <path d="M10 14V8c0-8 13-8 13 0v8" fill="#fff" strokeWidth="1.8" />
              <path d="M1 13h13c5 0 9-1 9-5v9c0 3-2 5-6 5H1Z" fill="#fff" strokeWidth="1.8" />
              <path d="M5 22v-3M9 22v-3M13 22v-3M17 22v-3" strokeWidth="1.8" />
              <circle cx="16.5" cy="8" r="3" fill="#fff" strokeWidth="1.8" />
            </Icon>
          </button>
          <button type="button" aria-label="Angle">
            <Icon>
              <path d="M1 22V16C2 1 22 1 23 16v6Z" fill="#fff" strokeWidth="1.8" />
              <path d="M1 19.5h22M6 19c0-12 12-12 12 0" strokeWidth="1.6" />
            </Icon>
          </button>
          <button type="button" aria-label="Mass properties">
            <Icon className="h-[40px] w-[40px]">
              <path d="M12 1v20M2 2h20M5 2 1.5 14h7L5 2M19 2l-3.5 12h7L19 2" strokeWidth="1.8" />
              <path d="M1 14h8c-1 4-7 4-8 0ZM15 14h8c-1 4-7 4-8 0Z" fill={INK} stroke="none" />
              <path d="M2 22h20" strokeWidth="3.6" />
            </Icon>
          </button>
        </div>
      </div>
    </main>
  );
}

function VariablePanel() {
  const cell = 'h-[81px] border-2 border-[#b0b0b0] px-[17px]';
  return (
    <aside className="flex min-w-0 flex-[1514] flex-col border-t-2 border-l-2 border-[#d3d3d3] bg-white pl-[10px] text-[33px] text-[#3c3c3c]">
      <button type="button" className="h-[72px] border-b-[5px] border-[#1651b0] pt-[13px] font-medium leading-[38px] text-[#1651b0]">
        Variable table
      </button>
      <div className="mt-[6px] flex h-[83px] items-center border-2 border-r-0 border-[#b0b0b0] bg-[#e9e9e9] pr-[12px] pl-[15px]">
        <Chevron />
        <h2 className="ml-[10px] text-[38px] font-medium text-[#333]">Part Studio 1</h2>
        <button type="button" aria-label="More" className="ml-auto">
          <Icon className="h-[10px] w-[46px]" box="0 0 46 10">
            <path d="M5 5h0M23 5h0M41 5h0" strokeWidth="10" strokeLinecap="round" />
          </Icon>
        </button>
      </div>
      <table className="-mt-[2px] w-[1348px] table-fixed border-collapse text-left">
        <thead>
          <tr className="text-center text-[36px]">
            {['Name', 'Variable type', 'Value', 'Description'].map((title) => (
              <th key={title} scope="col" className="h-[80px] border-2 border-[#b0b0b0] bg-[#e9e9e9] pb-[6px] font-bold text-[#333]">
                {title}
              </th>
            ))}
          </tr>
        </thead>
        <tbody>
          {variables.map((v) => (
            <tr key={v.name}>
              <td className={cell}>{v.name}</td>
              <td className={cell}>
                <div className="flex items-center">
                  <select aria-label={`${v.name} type`} className="flex-1 appearance-none bg-transparent" defaultValue={v.type}>
                    <option>Length</option>
                    <option>Angle</option>
                  </select>
                  <Caret className="-mr-[4px] h-4 w-4" />
                </div>
              </td>
              <td className={cell}>{v.value}</td>
              <td className={cell} />
            </tr>
          ))}
          <tr>
            <td className={cell}>
              <input type="text" aria-label="New variable name" placeholder="Name" className="w-full italic placeholder:text-[#7b7b7b]" />
            </td>
          </tr>
        </tbody>
      </table>

      <div className="mt-auto flex h-[97px] items-center border-t-2 border-b-2 border-l-2 border-[#cfcfcf] bg-[#eee] pr-[24px]">
        <div className="flex flex-1 justify-center">
          <div className="flex h-[83px] items-stretch rounded-[10px] border-2 border-[#a5a5a5] bg-white">
            <button type="button" className="flex w-[437px] items-center pl-[22px] text-[33px]">
              <VariableStudioIcon plus />
              <span className="ml-[12px]">Create Variable Studio</span>
            </button>
            <button type="button" aria-label="More options" className="flex w-[56px] items-center justify-center border-l-2 border-[#a5a5a5]">
              <Caret up />
            </button>
          </div>
        </div>
        <button type="button" aria-label="Help">
          <HelpIcon className="h-[30px] w-[30px]" color="#a3a3a3" mark="#eee" />
        </button>
      </div>
    </aside>
  );
}

function DocumentTabs() {
  return (
    <div className="flex h-[65px] shrink-0 bg-[#d7d7d7] text-[33px]">
      <button type="button" aria-label="Insert tab" className="flex w-[95px] items-center justify-center pr-[12px]">
        <Icon className="h-10 w-10">
          <path d="M12 1v22M1 12h22" stroke="#666" strokeWidth="3.6" />
        </Icon>
      </button>
      <button type="button" className="mr-[4px] flex w-[479px] items-center gap-[8px] border-b-[3px] border-[#1651b0] bg-white pl-[27px] text-[#3c3c3c]">
        <PartStudioIcon />
        Part Studio 1
      </button>
      <button type="button" className="mr-[5px] flex w-[485px] items-center gap-[8px] rounded-b-[12px] bg-[#e9e9e9] pl-[27px] text-[#5c5c5c]">
        <PartStudioIcon />
        Part Studio 2
      </button>
      <button type="button" className="flex w-[478px] items-center gap-[8px] rounded-b-[12px] bg-[#e9e9e9] pl-[27px] text-[#5c5c5c]">
        <AssemblyIcon />
        Assembly 1
      </button>
    </div>
  );
}

function Callout() {
  return (
    <div className="pointer-events-none absolute top-[60px] left-[2016px] flex items-start">
      <div className="mt-[37px] h-[104px] w-[115px] border-[13px] border-[#ff2600]" />
      <svg className="ml-[19px] h-[83px] w-[172px]" viewBox="0 0 172 83" aria-hidden="true">
        <path d="M0 42 42 0V21H172V63H42V83Z" fill="#ff2600" />
      </svg>
      <strong className="-mt-[18px] ml-[31px] whitespace-nowrap font-[Liberation_Sans,Arial,sans-serif] text-[77px] leading-[88px] font-bold text-[#ff0000]">
        CIRCULAR PATTERN
      </strong>
    </div>
  );
}

export default function App() {
  return (
    <div className="relative flex h-screen flex-col overflow-hidden bg-white font-[Roboto,'Noto_Sans',sans-serif]">
      <Header />
      <div className="flex min-h-0 flex-1">
        <SideRail />
        <div className="flex min-w-0 flex-1 flex-col">
          <Toolbar />
          <div className="flex min-h-0 flex-1">
            <FeaturePanel />
            <Canvas />
            <VariablePanel />
          </div>
          <DocumentTabs />
        </div>
      </div>
      <Callout />
    </div>
  );
}
